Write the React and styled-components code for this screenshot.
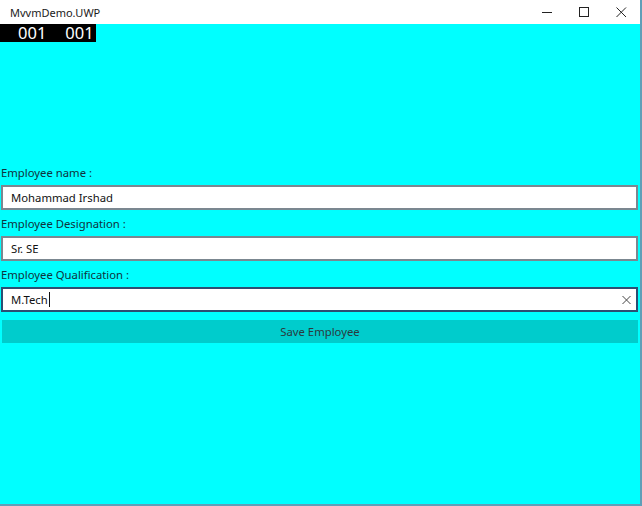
import React from "react";
import styled, { createGlobalStyle } from "styled-components";

const GlobalStyle = createGlobalStyle`
  html, body {
    margin: 0;
    padding: 0;
    background: #ffffff;
  }
  * {
    box-sizing: border-box;
  }
`;

const Window = styled.div`
  width: 642px;
  height: 506px;
  display: flex;
  flex-direction: column;
  background: #00ffff;
  border-right: 2px solid #5f9fb8;
  border-bottom: 2px solid #5f9fb8;
  font-family: "Noto Sans", "Open Sans", sans-serif;
  overflow: hidden;
`;

const TitleBar = styled.div`
  height: 24px;
  flex-shrink: 0;
  display: flex;
  align-items: center;
  background: #ffffff;
  padding-left: 10px;
`;

const Title = styled.span`
  flex: 1;
  font-size: 11px;
  color: #1a1a1a;
`;

const WinButton = styled.div`
  width: 37px;
  height: 24px;
  display: flex;
  align-items: center;
  justify-content: center;
  color: #222;
`;

const Content = styled.div`
  flex: 1;
  display: flex;
  flex-direction: column;
`;

const Counter = styled.div`
  align-self: flex-start;
  width: 96px;
  height: 18px;
  background: #000;
  color: #fff;
  font-size: 16.5px;
  line-height: 18px;
  display: flex;
  gap: 19px;
  padding-left: 18px;
`;

const Form = styled.div`
  margin-top: 119px;
  display: flex;
  flex-direction: column;
  padding-right: 2px;
`;

const Label = styled.div`
  font-size: 11.3px;
  color: #10323c;
  height: 24px;
  line-height: 15px;
  padding-left: 1px;
  padding-top: 4px;
`;

const Field = styled.div`
  position: relative;
  margin-left: 1px;
  height: 25px;
  background: #fff;
  border: 2px solid ${(p) => (p.focused ? "#2c4f73" : "#7b8790")};
  display: flex;
  align-items: center;
  padding-left: 8px;
  font-size: 11.3px;
  color: #111;
  margin-bottom: 2px;
`;

const Caret = styled.span`
  display: inline-block;
  width: 1px;
  height: 15px;
  background: #111;
  margin-left: 1px;
`;

const Clear = styled.div`
  position: absolute;
  right: 5px;
  top: 50%;
  transform: translateY(-50%);
  display: flex;
`;

const SaveButton = styled.div`
  margin: 6px 0 0 2px;
  height: 23px;
  background: #00cccc;
  color: #2a3a3e;
  font-size: 11.3px;
  display: flex;
  align-items: center;
  justify-content: center;
`;

const App = () => {
  return (
    <>
      <GlobalStyle />
      <Window>
        <TitleBar>
          <Title>MvvmDemo.UWP</Title>
          <WinButton>
            <svg width="11" height="11" viewBox="0 0 11 11">
              <line x1="0" y1="5.5" x2="10" y2="5.5" stroke="#222" strokeWidth="1" />
            </svg>
          </WinButton>
          <WinButton>
            <svg width="11" height="11" viewBox="0 0 11 11">
              <rect x="0.5" y="0.5" width="9" height="9" fill="none" stroke="#222" strokeWidth="1" />
            </svg>
          </WinButton>
          <WinButton>
            <svg width="11" height="11" viewBox="0 0 11 11">
              <path d="M0.5 0.5 L10 10 M10 0.5 L0.5 10" stroke="#222" strokeWidth="1" />
            </svg>
          </WinButton>
        </TitleBar>
        <Content>
          <Counter>
            <span>001</span>
            <span>001</span>
          </Counter>
          <Form>
            <Label>Employee name :</Label>
            <Field>Mohammad Irshad</Field>
            <Label>Employee Designation :</Label>
            <Field>Sr. SE</Field>
            <Label>Employee Qualification :</Label>
            <Field focused>
              M.Tech
              <Caret />
              <Clear>
                <svg width="9" height="9" viewBox="0 0 9 9">
                  <path d="M0.5 0.5 L8.5 8.5 M8.5 0.5 L0.5 8.5" stroke="#444" strokeWidth="1" />
                </svg>
              </Clear>
            </Field>
            <SaveButton>Save Employee</SaveButton>
          </Form>
        </Content>
      </Window>
    </>
  );
};

export default App;
